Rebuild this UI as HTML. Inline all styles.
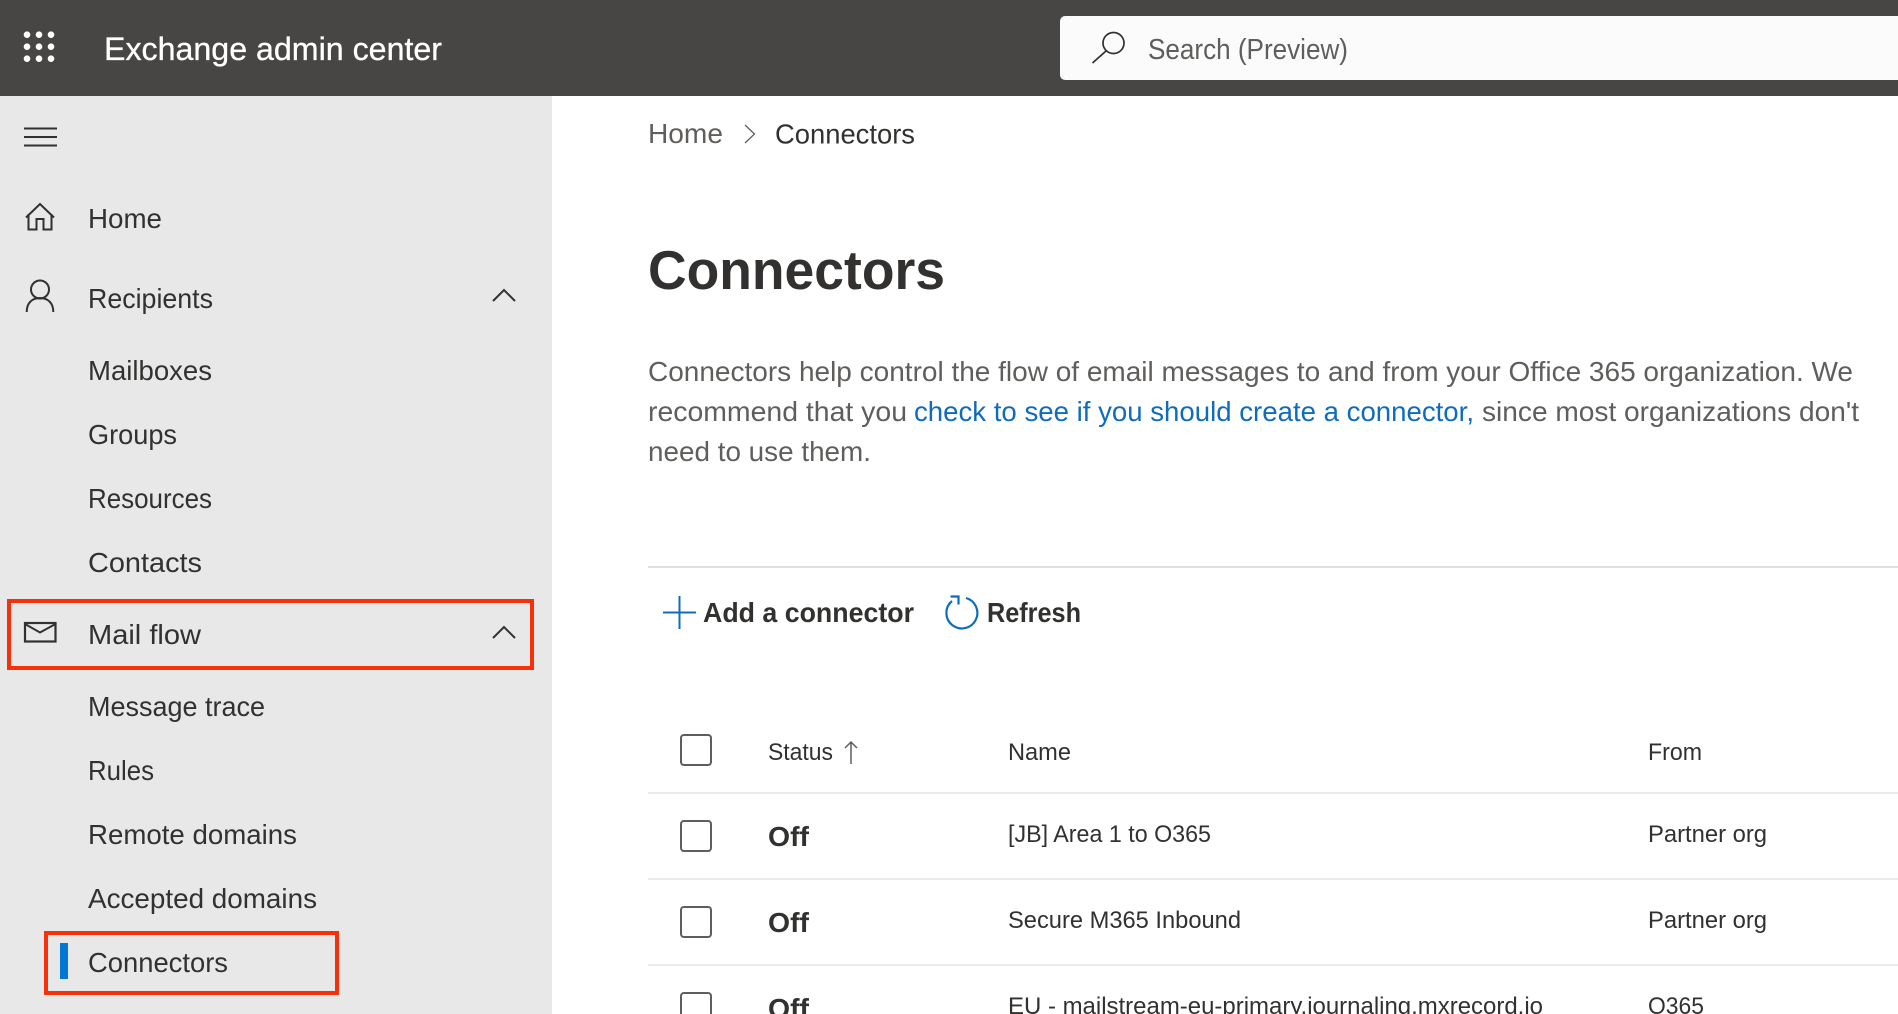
<!DOCTYPE html>
<html lang="en">
<head>
<meta charset="utf-8">
<title>Exchange admin center - Connectors</title>
<style>
html,body{margin:0;padding:0;background:#fff;width:1898px;height:1014px;overflow:hidden}
svg{display:block}
text{font-family:"Liberation Sans",Arial,sans-serif;font-size:27px;fill:#323130}
.nav{font-size:28px;fill:#323130}
.p{font-size:27.5px;fill:#605e5c}
.t{font-size:24px;fill:#323130}
.b{font-weight:700}
</style>
</head>
<body>
<svg width="1898" height="1014" viewBox="0 0 1898 1014" xmlns="http://www.w3.org/2000/svg">
<rect width="1898" height="1014" fill="#fff"/>
<!-- header -->
<rect width="1898" height="96" fill="#484644"/>
<g fill="#fff">
<circle cx="27" cy="34.700" r="3.300"/><circle cx="39" cy="34.700" r="3.300"/><circle cx="51" cy="34.700" r="3.300"/>
<circle cx="27" cy="46.700" r="3.300"/><circle cx="39" cy="46.700" r="3.300"/><circle cx="51" cy="46.700" r="3.300"/>
<circle cx="27" cy="58.700" r="3.300"/><circle cx="39" cy="58.700" r="3.300"/><circle cx="51" cy="58.700" r="3.300"/>
</g>
<text x="104" y="60" style="font-size:32px;fill:#fff;stroke:#fff;stroke-width:.3" textLength="338" lengthAdjust="spacingAndGlyphs">Exchange admin center</text>
<rect x="1060" y="16" width="860" height="64" rx="5" fill="#fbfbfb"/>
<g fill="none" stroke="#323130" stroke-width="1.700">
<circle cx="1113.500" cy="43" r="10.500"/>
<path d="M1106 51L1092.500 63"/>
</g>
<text x="1148" y="59" style="font-size:28.500px;fill:#605e5c" textLength="200" lengthAdjust="spacingAndGlyphs">Search (Preview)</text>

<!-- sidebar -->
<rect y="96" width="552" height="918" fill="#e8e8e8"/>
<g stroke="#323130" stroke-width="2" fill="none">
<path d="M24 128.500H57M24 137H57M24 145.500H57"/>
<path d="M26 217.500L40 204L54 217.500M28.500 214V229.500H36.500V219H43.500V229.500H51.500V214"/>
<circle cx="40" cy="289.500" r="9"/>
<path d="M26.700 312C26.700 303 32 298 40 298C48 298 53.300 303 53.300 312"/>
<path d="M493 301L504 290L515 301"/>
<rect x="25" y="623" width="30.500" height="18.500" stroke-width="2.200"/>
<path d="M25 624L40 632.500L55.500 624"/>
<path d="M493 638L504 627L515 638"/>
</g>
<text class="nav" x="88" y="228" textLength="74" lengthAdjust="spacingAndGlyphs">Home</text>
<text class="nav" x="88" y="308" textLength="125" lengthAdjust="spacingAndGlyphs">Recipients</text>
<text class="nav" x="88" y="380" textLength="124" lengthAdjust="spacingAndGlyphs">Mailboxes</text>
<text class="nav" x="88" y="444" textLength="89" lengthAdjust="spacingAndGlyphs">Groups</text>
<text class="nav" x="88" y="508" textLength="124" lengthAdjust="spacingAndGlyphs">Resources</text>
<text class="nav" x="88" y="572" textLength="114" lengthAdjust="spacingAndGlyphs">Contacts</text>
<text class="nav" x="88" y="644" textLength="113" lengthAdjust="spacingAndGlyphs">Mail flow</text>
<text class="nav" x="88" y="716" textLength="177" lengthAdjust="spacingAndGlyphs">Message trace</text>
<text class="nav" x="88" y="780" textLength="66" lengthAdjust="spacingAndGlyphs">Rules</text>
<text class="nav" x="88" y="844" textLength="209" lengthAdjust="spacingAndGlyphs">Remote domains</text>
<text class="nav" x="88" y="908" textLength="229" lengthAdjust="spacingAndGlyphs">Accepted domains</text>
<text class="nav" x="88" y="972" textLength="140" lengthAdjust="spacingAndGlyphs">Connectors</text>
<rect x="60" y="943" width="8" height="36" fill="#0078d4"/>
<rect x="9" y="601" width="523" height="67" fill="none" stroke="#f5310c" stroke-width="4"/>
<rect x="46" y="933" width="291" height="60" fill="none" stroke="#f5310c" stroke-width="4"/>

<!-- breadcrumb -->
<text x="648" y="143" style="font-size:28px;fill:#605e5c" textLength="75" lengthAdjust="spacingAndGlyphs">Home</text>
<path d="M745 125L754.500 134L745 143" fill="none" stroke="#605e5c" stroke-width="1.300"/>
<text x="775" y="143.500" style="font-size:28px;fill:#323130" textLength="140" lengthAdjust="spacingAndGlyphs">Connectors</text>
<text class="b" x="648" y="289" style="font-size:55px;fill:#323130" textLength="297" lengthAdjust="spacingAndGlyphs">Connectors</text>

<!-- description -->
<text class="p" x="648" y="381" textLength="1205" lengthAdjust="spacingAndGlyphs">Connectors help control the flow of email messages to and from your Office 365 organization. We</text>
<text class="p" x="648" y="421" textLength="259" lengthAdjust="spacingAndGlyphs">recommend that you</text>
<text class="p" x="914" y="421" style="fill:#0f6cbd" textLength="560" lengthAdjust="spacingAndGlyphs">check to see if you should create a connector,</text>
<text class="p" x="1482" y="421" textLength="377" lengthAdjust="spacingAndGlyphs">since most organizations don't</text>
<text class="p" x="648" y="461" textLength="223" lengthAdjust="spacingAndGlyphs">need to use them.</text>

<rect x="648" y="566" width="1250" height="2" fill="#e1dfdd"/>

<!-- command bar -->
<path d="M663 612.500H696M679.500 596V629" stroke="#0f6cbd" stroke-width="2" fill="none"/>
<text class="b" x="703" y="622" style="font-size:28px;fill:#323130" textLength="211" lengthAdjust="spacingAndGlyphs">Add a connector</text>
<path d="M966 598A15.500 15.500 0 1 1 952 601" fill="none" stroke="#0f6cbd" stroke-width="2.200"/>
<path d="M950.500 596.500H958.500V604.500" fill="none" stroke="#0f6cbd" stroke-width="2.200"/>
<text class="b" x="987" y="622" style="font-size:28px;fill:#323130" textLength="94" lengthAdjust="spacingAndGlyphs">Refresh</text>

<!-- table header -->
<rect x="681" y="735" width="30" height="30" rx="3" fill="#fff" stroke="#605e5c" stroke-width="2"/>
<text class="t" x="768" y="760" textLength="65" lengthAdjust="spacingAndGlyphs">Status</text>
<path d="M851 764V742M845 748L851 742L857 748" fill="none" stroke="#605e5c" stroke-width="1.500"/>
<text class="t" x="1008" y="760" textLength="63" lengthAdjust="spacingAndGlyphs">Name</text>
<text class="t" x="1648" y="760" textLength="54" lengthAdjust="spacingAndGlyphs">From</text>
<rect x="648" y="792" width="1250" height="2" fill="#edebe9"/>

<!-- rows -->
<rect x="681" y="821" width="30" height="30" rx="3" fill="#fff" stroke="#605e5c" stroke-width="2"/>
<text class="b" x="768" y="846" style="font-size:28px;fill:#323130" textLength="41" lengthAdjust="spacingAndGlyphs">Off</text>
<text class="t" x="1008" y="842" textLength="203" lengthAdjust="spacingAndGlyphs">[JB] Area 1 to O365</text>
<text class="t" x="1648" y="842" textLength="119" lengthAdjust="spacingAndGlyphs">Partner org</text>
<rect x="648" y="878" width="1250" height="2" fill="#edebe9"/>

<rect x="681" y="907" width="30" height="30" rx="3" fill="#fff" stroke="#605e5c" stroke-width="2"/>
<text class="b" x="768" y="932" style="font-size:28px;fill:#323130" textLength="41" lengthAdjust="spacingAndGlyphs">Off</text>
<text class="t" x="1008" y="928" textLength="233" lengthAdjust="spacingAndGlyphs">Secure M365 Inbound</text>
<text class="t" x="1648" y="928" textLength="119" lengthAdjust="spacingAndGlyphs">Partner org</text>
<rect x="648" y="964" width="1250" height="2" fill="#edebe9"/>

<rect x="681" y="993" width="30" height="30" rx="3" fill="#fff" stroke="#605e5c" stroke-width="2"/>
<text class="b" x="768" y="1018" style="font-size:28px;fill:#323130" textLength="41" lengthAdjust="spacingAndGlyphs">Off</text>
<text class="t" x="1008" y="1014" textLength="535" lengthAdjust="spacingAndGlyphs">EU - mailstream-eu-primary.journaling.mxrecord.io</text>
<text class="t" x="1648" y="1014" textLength="56" lengthAdjust="spacingAndGlyphs">O365</text>
</svg>
</body>
</html>
